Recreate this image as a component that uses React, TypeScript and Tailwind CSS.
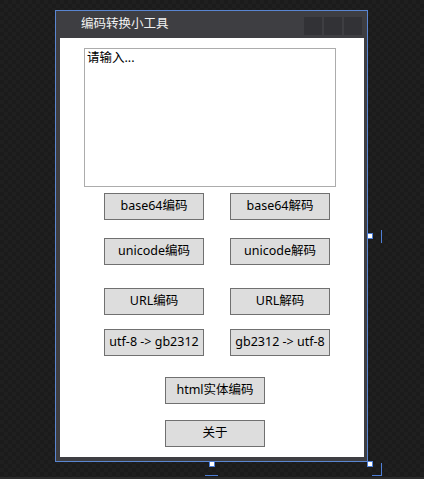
import React from 'react';

const font = { fontFamily: '"Noto Sans", "Noto Sans CJK SC", sans-serif' };

const Btn: React.FC<{ label: string; className?: string }> = ({ label, className = '' }) => (
  <div
    className={`w-[100px] h-[27px] flex items-center justify-center whitespace-nowrap border border-[#707070] bg-[#dddddd] text-[12.5px] text-black leading-none ${className}`}
  >
    {label}
  </div>
);

const Handle: React.FC<{ className: string }> = ({ className }) => (
  <div className={`absolute w-[6px] h-[6px] bg-white border border-[#4f7fd6] ${className}`} />
);

export default function App() {
  return (
    <div
      className="relative w-[424px] h-[479px] overflow-hidden bg-[#1d1d1d] bg-[repeating-conic-gradient(#1f1f1f_0_25%,#1b1b1b_0_50%)] bg-[length:8px_8px]"
      style={font}
    >
      {/* designer window */}
      <div className="absolute left-[55px] top-[10px] w-[313px] h-[452px] border border-[#5a86d2] bg-[#3e3e42] flex flex-col">
        <div className="h-[27px] flex items-center pl-[25px] pr-[5px]">
          <span className="text-[12.5px] text-[#f1f1f1] flex-1">编码转换小工具</span>
          <div className="flex gap-[2px] self-start mt-[6px]">
            <div className="w-[18px] h-[18px] bg-[#323236]" />
            <div className="w-[18px] h-[18px] bg-[#323236]" />
            <div className="w-[18px] h-[18px] bg-[#323236]" />
          </div>
        </div>
        <div className="ml-[4px] mr-[3px] h-[419px] bg-white flex flex-col">
          <div className="ml-[24px] mt-[10px] w-[252px] h-[139px] border border-[#acacac] px-[2px] pt-[1px] text-[12.5px] text-black leading-[16px]">
            请输入...
          </div>
          <div className="ml-[44px] mt-[6px] flex gap-[26px]">
            <Btn label="base64编码" />
            <Btn label="base64解码" />
          </div>
          <div className="ml-[44px] mt-[18px] flex gap-[26px]">
            <Btn label="unicode编码" />
            <Btn label="unicode解码" />
          </div>
          <div className="ml-[44px] mt-[23px] flex gap-[26px]">
            <Btn label="URL编码" />
            <Btn label="URL解码" />
          </div>
          <div className="ml-[44px] mt-[14px] flex gap-[26px]">
            <Btn label="utf-8 -> gb2312" />
            <Btn label="gb2312 -> utf-8" />
          </div>
          <div className="ml-[105px] mt-[21px] flex">
            <Btn label="html实体编码" />
          </div>
          <div className="ml-[105px] mt-[16px] flex">
            <Btn label="关于" />
          </div>
        </div>
      </div>

      {/* selection handles */}
      <Handle className="left-[367px] top-[233px]" />
      <Handle className="left-[209px] top-[461px]" />
      <Handle className="left-[367px] top-[461px]" />
      <div className="absolute left-[381px] top-[230px] w-[1px] h-[13px] bg-[#4f7fd6]" />
      <div className="absolute left-[205px] top-[475px] w-[13px] h-[1px] bg-[#4f7fd6]" />
      <div className="absolute left-[381px] top-[463px] w-[1px] h-[13px] bg-[#4f7fd6]" />
      <div className="absolute left-[372px] top-[475px] w-[10px] h-[1px] bg-[#4f7fd6]" />

      <div className="absolute left-0 bottom-0 w-full h-[2px] bg-[#2b2b2b]" />
    </div>
  );
}
